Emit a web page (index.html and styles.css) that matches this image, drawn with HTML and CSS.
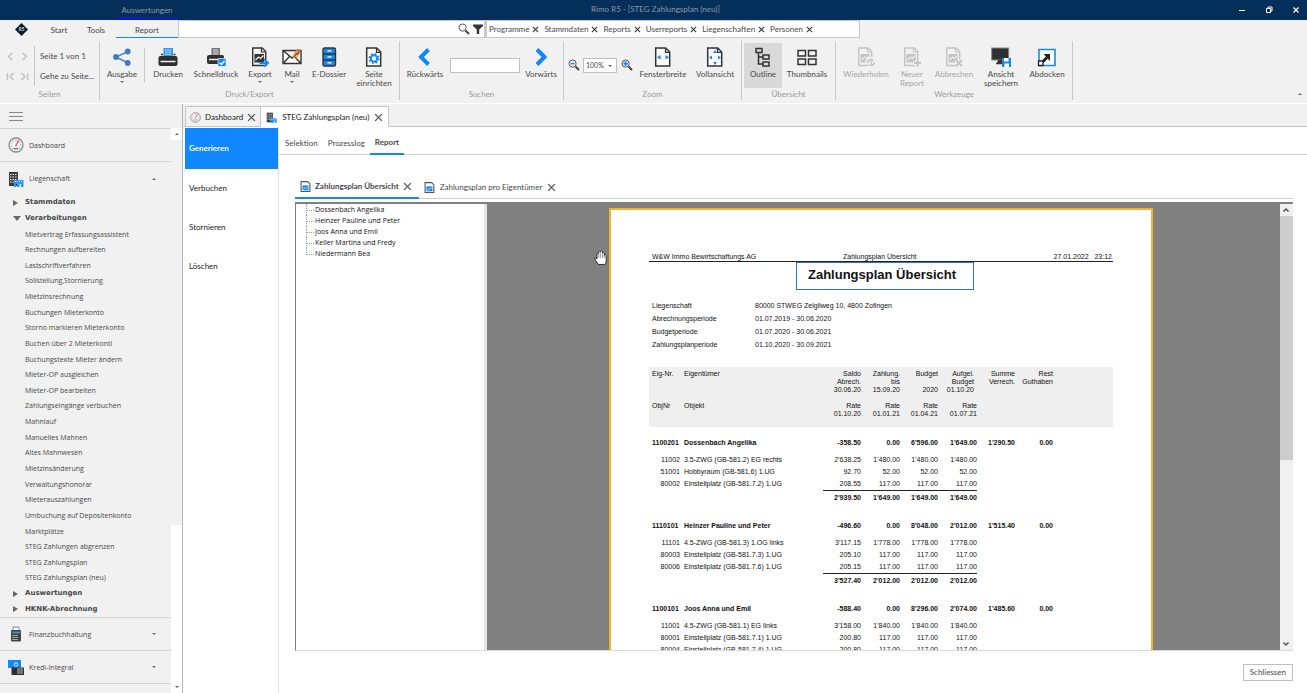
FILE: index.html
```html
<!DOCTYPE html>
<html lang="de">
<head>
<meta charset="utf-8">
<title>Rimo R5 - [STEG Zahlungsplan (neu)]</title>
<link rel="stylesheet" href="styles.css">
</head>
<body>
<svg class="defs" aria-hidden="true">
  <symbol id="x" viewBox="0 0 8 8"><path d="M1 1l6 6M7 1L1 7" fill="none" stroke="currentColor" stroke-width="1.2"/></symbol>
  <symbol id="lens" viewBox="0 0 12 12"><circle cx="4.6" cy="4.6" r="3.6" fill="none" stroke="#555" stroke-width="1"/><path d="M7.5 7.5l3.5 3.5" stroke="#444" stroke-width="2"/></symbol>
  <symbol id="doc" viewBox="0 0 20 20"><path d="M2.7 1h10l4 4v14h-14z" fill="#fbfbfb" stroke="currentColor" stroke-width="1.5"/><path d="M12.5 1v4.300h4.300" fill="none" stroke="currentColor" stroke-width="1.3"/></symbol>
  <symbol id="docpic" viewBox="0 0 20 20"><path d="M2.700 1h9.500l3.500 3.500v14H2.700z" fill="none" stroke="currentColor" stroke-width="1.400"/><path d="M11.500 1v4h4" fill="none" stroke="currentColor" stroke-width="1.200"/><path d="M4.500 7h9.500v8.500h-9.500z" fill="currentColor"/><path d="M5.500 13l3-3 2 1.500 3-3" fill="none" stroke="#f0f0f0" stroke-width="1.300"/></symbol>
  <symbol id="gauge" viewBox="0 0 16 16"><circle cx="8" cy="8" r="7" fill="#fafafa" stroke="#888" stroke-width="1.300"/><circle cx="8" cy="8" r="4.700" fill="none" stroke="#b0b0b0" stroke-width="1.200" stroke-dasharray="1.500 1"/><path d="M7.500 9.500l3-6" stroke="#e0506a" stroke-width="1.400"/><path d="M5.500 11.500h5" stroke="#777"/></symbol>
  <symbol id="building" viewBox="0 0 16 16"><path d="M1 1h9v14H1z" fill="#3c3c3c"/><path d="M2 3.500h7M2 6h7M2 8.500h7M2 11h7" stroke="#eee" stroke-width="1.100" stroke-dasharray="1.500 1"/><path d="M6 9h9.500v7H13v-3h-1.500v3H9v-3H8v3H6z" fill="#2e95ff"/><path d="M7 10.500h8" stroke="#d6eaff" stroke-dasharray="1 1"/></symbol>
  <symbol id="minidoc" viewBox="0 0 10 10"><path d="M1 .6h6l2 2v6.900H1z" fill="#fff" stroke="#555"/><path d="M2.300 4h5.400v4.500H2.300z" fill="#1787f2"/><path d="M3 7.500l1.500-1.300 1 .5 1.700-1.500" fill="none" stroke="#fff" stroke-width=".6"/></symbol>
</svg>

<div class="app">
  <header class="titlebar">
    <span class="context-tab">Auswertungen</span>
    <h1 class="window-title">Rimo R5 - [STEG Zahlungsplan (neu)]</h1>
    <div class="window-buttons">
      <button type="button" aria-label="Minimieren"><svg viewBox="0 0 8 8"><path d="M1 4.500h6" stroke="#fff"/></svg></button>
      <button type="button" aria-label="Wiederherstellen"><svg viewBox="0 0 8 8"><path d="M1.500 2.500h4v4h-4zM3 2.500V1h4v4H5.500" fill="none" stroke="#fff"/></svg></button>
      <button type="button" aria-label="Fenster schliessen"><svg viewBox="0 0 8 8"><path d="M1.500 1.500l5 5M6.500 1.500l-5 5" stroke="#fff" stroke-width="1.300"/></svg></button>
    </div>
  </header>

  <nav class="menubar">
    <span class="logo"><svg viewBox="0 0 14 14"><path d="M7 0l7 7-7 7-7-7z" fill="#0c1c30"/><text x="7" y="9" text-anchor="middle" font-size="5" font-weight="700" fill="#d5dce5">R5</text></svg></span>
    <button type="button" class="menu-start">Start</button>
    <button type="button" class="menu-tools">Tools</button>
    <button type="button" class="menu-report">Report</button>
    <div class="search"><input type="text" aria-label="Suche"><svg class="i12"><use href="#lens"/></svg><svg class="i12" viewBox="0 0 12 12"><path d="M1 1.500h10v1.500L7.200 6.500V11H4.800V6.500L1 3z" fill="#333"/></svg></div>
    <div class="filters">
      <button type="button">Programme <svg><use href="#x"/></svg></button>
      <button type="button">Stammdaten <svg><use href="#x"/></svg></button>
      <button type="button">Reports <svg><use href="#x"/></svg></button>
      <button type="button">Userreports <svg><use href="#x"/></svg></button>
      <button type="button">Liegenschaften <svg><use href="#x"/></svg></button>
      <button type="button">Personen <svg><use href="#x"/></svg></button>
    </div>
  </nav>

  <div class="ribbon">
    <section class="group g-pages">
      <div class="tools pager">
        <div class="arrows">
          <button type="button" aria-label="Vorherige Seite"><svg viewBox="0 0 10 10"><path d="M7 1L3 5l4 4"/></svg></button>
          <button type="button" aria-label="Nächste Seite"><svg viewBox="0 0 10 10"><path d="M3 1l4 4-4 4"/></svg></button>
          <button type="button" aria-label="Erste Seite"><svg viewBox="0 0 10 10"><path d="M8.500 1l-4 4 4 4M1.500 1v8"/></svg></button>
          <button type="button" aria-label="Letzte Seite"><svg viewBox="0 0 10 10"><path d="M1.500 1l4 4-4 4M8.500 1v8"/></svg></button>
        </div>
        <div class="page-info"><span>Seite 1 von 1</span><button type="button">Gehe zu Seite...</button></div>
      </div>
      <h2>Seiten</h2>
    </section>

    <section class="group g-export">
      <div class="tools">
        <button type="button" class="tool w44"><svg viewBox="0 0 20 20"><path d="M16 4.500L4 10l12 6" fill="none" stroke="#4a86c8" stroke-width="1.500"/><g fill="#3b7cc4"><circle cx="15.700" cy="4.500" r="2.900"/><circle cx="4" cy="10" r="2.900"/><circle cx="15.700" cy="16" r="2.900"/></g></svg>Ausgabe<i class="caret"></i></button>
        <span class="divider"></span>
        <button type="button" class="tool w46"><svg viewBox="0 0 20 20"><path d="M5.500 1h9.500v9H5.500z" fill="#2e95ff"/><path d="M7 3h6.500M7 5.200h6.500M7 7.400h6.500" stroke="#bcdcff"/><path d="M3 7.500h2M15.500 7.500h2" stroke="#333" stroke-width="1.500"/><rect x=".5" y="9" width="19" height="10" rx="2" fill="#2f2f2f"/><path d="M2.500 14.500h15" stroke="#eee" stroke-width="1.500"/></svg>Drucken</button>
        <button type="button" class="tool w50"><svg viewBox="0 0 20 20"><path d="M5.500 1h8.500v8H5.500z" fill="#777"/><path d="M7 3h5.500M7 5h5.500M7 7h5.500" stroke="#ddd"/><rect x="1" y="8" width="17" height="9" rx="2" fill="#2f2f2f"/><path d="M3 12.500h9" stroke="#eee" stroke-width="1.500"/><path d="M12 11.500h8v8h-8z" fill="#1787f2" stroke="#f1f1f1" stroke-width=".7"/><path d="M13.500 15.500l2 2 3-3.500" fill="none" stroke="#fff" stroke-width="1.200"/></svg>Schnelldruck</button>
        <button type="button" class="tool w38"><svg viewBox="0 0 20 20"><use href="#docpic"/><path d="M9.500 16h7M14 12.300l4 3.700-4 3.700" fill="none" stroke="#1787f2" stroke-width="2"/></svg>Export<i class="caret"></i></button>
        <button type="button" class="tool w26"><svg viewBox="0 0 20 20"><path d="M1 3.500h18v13H1zM1 3.500l9 7.500 9-7.500M1 16.500l6.500-7M19 16.500l-6.500-7" fill="#fff" stroke="#333" stroke-width="1.400"/><path d="M11.500 8.500l3-5q1-1.500 2.500-.5t.5 2.500l-3 5q-1 1.300-2 .5t-.5-2l2.500-4" fill="none" stroke="#f08a24" stroke-width="1.300"/></svg>Mail<i class="caret"></i></button>
        <button type="button" class="tool w48"><svg viewBox="0 0 20 20"><rect x="4" y="1" width="12.500" height="18" rx="1.500" fill="#1787f2" stroke="#333" stroke-width="1.400"/><path d="M4 7h12.500M4 13h12.500" stroke="#333" stroke-width="1.300"/><path d="M8.500 3.800h4M8.500 9.800h4M8.500 15.800h4" stroke="#fff" stroke-width="1.300"/></svg>E-Dossier</button>
        <button type="button" class="tool w42"><svg viewBox="0 0 20 20"><use href="#doc"/><circle cx="10" cy="11.500" r="3.200" fill="none" stroke="#1787f2" stroke-width="2"/><circle cx="10" cy="11.500" r="4.700" fill="none" stroke="#1787f2" stroke-width="1.600" stroke-dasharray="1.850 1.850"/></svg>Seite<br>einrichten</button>
      </div>
      <h2>Druck/Export</h2>
    </section>

    <section class="group g-search">
      <div class="tools">
        <button type="button" class="tool w50"><svg viewBox="0 0 20 20"><path d="M13.500 2.500L6 10l7.500 7.500" fill="none" stroke="#1087ff" stroke-width="4"/></svg>Rückwärts</button>
        <input type="text" class="find" aria-label="Suchbegriff">
        <button type="button" class="tool w42"><svg viewBox="0 0 20 20"><path d="M6 2.500l7.500 7.500L6 17.500" fill="none" stroke="#1087ff" stroke-width="4"/></svg>Vorwärts</button>
      </div>
      <h2>Suchen</h2>
    </section>

    <section class="group g-zoom">
      <div class="tools">
        <button type="button" class="zoom-btn" aria-label="Verkleinern"><svg class="i12" viewBox="0 0 12 12"><use href="#lens"/><path d="M2.500 4.600h4.200" stroke="#1787f2" stroke-width="1.500"/></svg></button>
        <span class="zoom-box"><select aria-label="Zoomstufe"><option>100%</option></select><i class="caret"></i></span>
        <button type="button" class="zoom-btn" aria-label="Vergrössern"><svg class="i12" viewBox="0 0 12 12"><use href="#lens"/><path d="M2.300 4.600h4.600M4.600 2.300v4.600" stroke="#1787f2" stroke-width="1.700"/></svg></button>
        <button type="button" class="tool w54"><svg viewBox="0 0 20 20"><use href="#doc"/><path d="M7.500 8v4.500L4 10.200zM12.500 8v4.500l3.500-2.300z" fill="#1787f2"/></svg>Fensterbreite</button>
        <button type="button" class="tool w50"><svg viewBox="0 0 20 20"><use href="#doc"/><path d="M7 8.500v4l-3-2zM13 8.500v4l3-2zM8 6h4l-2-3zM8 15h4l-2 3z" fill="#1787f2"/></svg>Vollansicht</button>
      </div>
      <h2>Zoom</h2>
    </section>

    <section class="group g-view">
      <div class="tools">
        <button type="button" class="tool w38 active"><svg viewBox="0 0 20 20"><path d="M3 1.500h6v4H3zM10 8h6v4h-6zM10 15h6v4h-6zM5.500 5.500V17H10M5.500 10H10" fill="none" stroke="#333" stroke-width="1.500"/></svg>Outline</button>
        <button type="button" class="tool w50"><svg viewBox="0 0 20 20"><path d="M1 3.500h7.500v5.500H1zM11.500 3.500H19v5.500h-7.500zM1 12h7.500v5.500H1zM11.500 12H19v5.500h-7.500z" fill="none" stroke="#333" stroke-width="1.500"/></svg>Thumbnails</button>
      </div>
      <h2>Übersicht</h2>
    </section>

    <section class="group g-work">
      <div class="tools">
        <button type="button" class="tool w54" disabled><svg viewBox="0 0 20 20"><use href="#docpic"/><path d="M11 15.500a3.500 3.500 0 0 1 6-2.500M18.500 15.500a3.500 3.500 0 0 1-6 2.500" fill="none" stroke="#f1f1f1" stroke-width="4"/><path d="M11.500 15.500a3.300 3.300 0 0 1 5.500-2M18.500 15.500a3.300 3.300 0 0 1-5.500 2" fill="none" stroke="currentColor" stroke-width="1.600"/></svg>Wiederholen</button>
        <button type="button" class="tool w38" disabled><svg viewBox="0 0 20 20"><use href="#docpic"/><path d="M11.500 16h7M15 12.500v7" stroke="#f1f1f1" stroke-width="4"/><path d="M12 16h7M15.500 12.500v7" stroke="currentColor" stroke-width="2"/></svg>Neuer<br>Report</button>
        <button type="button" class="tool w46" disabled><svg viewBox="0 0 20 20"><use href="#docpic"/><path d="M12 13l6 6M18 13l-6 6" stroke="#f1f1f1" stroke-width="4"/><path d="M12 13l6 6M18 13l-6 6" stroke="currentColor" stroke-width="1.800"/></svg>Abbrechen</button>
        <button type="button" class="tool w48"><svg viewBox="0 0 20 20"><rect x=".7" y="1" width="17" height="12" fill="#2f2f2f" stroke="#888"/><path d="M7 13h4v3H6z" fill="#333"/><path d="M5 16.500h6" stroke="#333" stroke-width="1.500"/><path d="M11 11h9v9h-9z" fill="#1787f2"/><path d="M13 11h4.500v3.500H13zM13.500 16.500h4.500V20h-4.500z" fill="#fff"/></svg>Ansicht<br>speichern</button>
        <button type="button" class="tool w44"><svg viewBox="0 0 20 20"><path d="M2 2.500h16v16H2z" fill="#fff" stroke="#1787f2" stroke-width="1.600"/><path d="M5.500 15L10 10.500" stroke="#222" stroke-width="3"/><path d="M6.500 7h6.500v7z" fill="#222"/><path d="M1.500 14h4.500v4.500H1.500z" fill="#fff" stroke="#222" stroke-width="1.300"/></svg>Abdocken</button>
      </div>
      <h2>Werkzeuge</h2>
    </section>
    <button type="button" class="collapse" aria-label="Menüband reduzieren"><i class="caret up"></i></button>
  </div>

  <div class="workspace">
    <aside class="sidebar">
      <button type="button" class="burger" aria-label="Navigation"><svg viewBox="0 0 14 10"><path d="M0 1.500h14M0 5.500h14M0 9.500h14" stroke="#888"/></svg></button>
      <div class="side-body">
        <div class="side-list">
          <button type="button" class="module"><svg><use href="#gauge"/></svg><span>Dashboard</span></button>
          <button type="button" class="module"><svg><use href="#building"/></svg><span>Liegenschaft</span><i class="caret up"></i></button>
          <ul class="tree">
            <li class="branch"><i class="closed"></i><a href="#">Stammdaten</a></li>
            <li class="branch"><i class="open"></i><a href="#">Verarbeitungen</a></li>
            <li><a href="#">Mietvertrag Erfassungsassistent</a></li>
            <li><a href="#">Rechnungen aufbereiten</a></li>
            <li><a href="#">Lastschriftverfahren</a></li>
            <li><a href="#">Sollstellung,Stornierung</a></li>
            <li><a href="#">Mietzinsrechnung</a></li>
            <li><a href="#">Buchungen Mieterkonto</a></li>
            <li><a href="#">Storno markieren Mieterkonto</a></li>
            <li><a href="#">Buchen über 2 Mieterkonti</a></li>
            <li><a href="#">Buchungstexte Mieter ändern</a></li>
            <li><a href="#">Mieter-OP ausgleichen</a></li>
            <li><a href="#">Mieter-OP bearbeiten</a></li>
            <li><a href="#">Zahlungseingänge verbuchen</a></li>
            <li><a href="#">Mahnlauf</a></li>
            <li><a href="#">Manuelles Mahnen</a></li>
            <li><a href="#">Altes Mahnwesen</a></li>
            <li><a href="#">Mietzinsänderung</a></li>
            <li><a href="#">Verwaltungshonorar</a></li>
            <li><a href="#">Mieterauszahlungen</a></li>
            <li><a href="#">Umbuchung auf Depositenkonto</a></li>
            <li><a href="#">Marktplätze</a></li>
            <li><a href="#">STEG Zahlungen abgrenzen</a></li>
            <li><a href="#">STEG Zahlungsplan</a></li>
            <li><a href="#">STEG Zahlungsplan (neu)</a></li>
            <li class="branch"><i class="closed"></i><a href="#">Auswertungen</a></li>
            <li class="branch"><i class="closed"></i><a href="#">HKNK-Abrechnung</a></li>
          </ul>
          <button type="button" class="module bordered"><svg viewBox="0 0 16 16"><path d="M5 5V1h6v4" fill="#fff" stroke="#888"/><rect x="3" y="4" width="10" height="11.500" rx="1" fill="#444"/><path d="M4 6.500h8" stroke="#2e95ff" stroke-width="1.800"/><path d="M4.500 9.500h5M4.500 11.500h5M4.500 13.500h5" stroke="#ddd" stroke-dasharray="1.200 .7"/></svg><span>Finanzbuchhaltung</span><i class="caret"></i></button>
          <button type="button" class="module"><svg viewBox="0 0 16 16"><path d="M0 1h13v8H0z" fill="#1787f2"/><circle cx="8" cy="5.500" r="1.700" fill="none" stroke="#fff" stroke-width=".8"/><path d="M3.500 8.500H16V16H3.500z" fill="#2f2f2f"/><path d="M9 10h6M9 12h6M9 14h6" stroke="#ddd" stroke-width=".8"/></svg><span>Kredi-Integral</span><i class="caret"></i></button>
        </div>
        <div class="side-scroll"><span class="sc-btn"><i class="caret up"></i></span><span class="sc-thumb"></span><span class="sc-btn"><i class="caret"></i></span></div>
      </div>
    </aside>

    <main class="main">
      <div class="doc-tabs">
        <button type="button"><svg class="i10"><use href="#gauge"/></svg>Dashboard<svg class="close"><use href="#x"/></svg></button>
        <button type="button" class="current"><svg class="i10"><use href="#building"/></svg>STEG Zahlungsplan (neu)<svg class="close"><use href="#x"/></svg></button>
      </div>
      <div class="content">
        <nav class="steps">
          <button type="button" class="selected">Generieren</button>
          <button type="button">Verbuchen</button>
          <button type="button">Stornieren</button>
          <button type="button">Löschen</button>
        </nav>
        <div class="pane">
          <div class="sub-tabs"><button type="button">Selektion</button><button type="button">Prozesslog</button><button type="button" class="selected">Report</button></div>
          <div class="report-area">
            <div class="report-tabs">
              <button type="button" class="selected"><svg class="i10"><use href="#minidoc"/></svg>Zahlungsplan Übersicht<svg class="close"><use href="#x"/></svg></button>
              <button type="button"><svg class="i10"><use href="#minidoc"/></svg>Zahlungsplan pro Eigentümer<svg class="close"><use href="#x"/></svg></button>
            </div>
            <div class="viewer">
              <ul class="outline">
                <li>Dossenbach Angelika</li><li>Heinzer Pauline und Peter</li><li>Joos Anna und Emil</li><li>Keller Martina und Fredy</li><li>Niedermann Bea</li>
              </ul>
              <div class="canvas">
                <svg class="hand" viewBox="0 0 13 15"><path d="M4.500 14.500L1 9.500Q.2 7.500 2 8l1 1V3.500q.8-1.300 1.700 0V2q.9-1.500 1.900 0v-.5q1-1.300 1.900.3V3q1-1.100 1.900.2v2q1.100-.9 1.800.3v5q0 2.500-1.500 4z" fill="#fff" stroke="#222" stroke-width=".9"/><path d="M4.800 3.500V8M6.700 2.500V8M8.600 3V8M10.400 4.500V8" stroke="#555" stroke-width=".6"/></svg>
                <article class="sheet">
                  <div class="sheet-head"><span>W&amp;W Immo Bewirtschaftungs AG</span><span>Zahlungsplan Übersicht</span><span>27.01.2022 &nbsp; 23:12</span></div>
                  <h2 class="sheet-title">Zahlungsplan Übersicht</h2>
                  <dl>
                    <dt>Liegenschaft</dt><dd>80000 STWEG Zelgliweg 10, 4800 Zofingen</dd>
                    <dt>Abrechnungsperiode</dt><dd>01.07.2019 - 30.06.2020</dd>
                    <dt>Budgetperiode</dt><dd>01.07.2020 - 30.06.2021</dd>
                    <dt>Zahlungsplanperiode</dt><dd>01.10.2020 - 30.09.2021</dd>
                  </dl>
                  <table>
                    <colgroup><col class="c-nr"><col class="c-name"><col class="c-a"><col class="c-b"><col class="c-a"><col class="c-b"><col class="c-a"><col class="c-a"><col></colgroup>
                    <thead>
                      <tr><th class="l">Eig-Nr.</th><th class="l">Eigentümer</th><th>Saldo<br>Abrech.<br>30.06.20</th><th>Zahlung.<br>bis<br>15.09.20</th><th>Budget<br><br>2020</th><th class="inset">Aufgel.<br>Budget<br>01.10.20</th><th>Summe<br>Verrech.</th><th>Rest<br>Guthaben</th><th></th></tr>
                      <tr class="second"><th class="l">ObjNr</th><th class="l">Objekt</th><th>Rate<br>01.10.20</th><th>Rate<br>01.01.21</th><th>Rate<br>01.04.21</th><th>Rate<br>01.07.21</th><th></th><th></th><th></th></tr>
                    </thead>
                    <tbody>
                      <tr class="owner"><td class="l">1100201</td><td class="l">Dossenbach Angelika</td><td>-358.50</td><td>0.00</td><td>6'596.00</td><td>1'649.00</td><td>1'290.50</td><td>0.00</td></tr>
                      <tr><td class="obj">11002</td><td class="l">3.5-ZWG (GB-581.2) EG rechts</td><td>2'638.25</td><td>1'480.00</td><td>1'480.00</td><td>1'480.00</td></tr>
                      <tr><td class="obj">51001</td><td class="l">Hobbyraum (GB-581.6) 1.UG</td><td>92.70</td><td>52.00</td><td>52.00</td><td>52.00</td></tr>
                      <tr><td class="obj">80002</td><td class="l">Einstellplatz (GB-581.7.2) 1.UG</td><td>208.55</td><td>117.00</td><td>117.00</td><td>117.00</td></tr>
                      <tr class="total"><td></td><td></td><td>2'939.50</td><td>1'649.00</td><td>1'649.00</td><td>1'649.00</td></tr>
                    </tbody>
                    <tbody>
                      <tr class="owner"><td class="l">1110101</td><td class="l">Heinzer Pauline und Peter</td><td>-496.60</td><td>0.00</td><td>8'048.00</td><td>2'012.00</td><td>1'515.40</td><td>0.00</td></tr>
                      <tr><td class="obj">11101</td><td class="l">4.5-ZWG (GB-581.3) 1.OG links</td><td>3'117.15</td><td>1'778.00</td><td>1'778.00</td><td>1'778.00</td></tr>
                      <tr><td class="obj">80003</td><td class="l">Einstellplatz (GB-581.7.3) 1.UG</td><td>205.10</td><td>117.00</td><td>117.00</td><td>117.00</td></tr>
                      <tr><td class="obj">80006</td><td class="l">Einstellplatz (GB-581.7.6) 1.UG</td><td>205.15</td><td>117.00</td><td>117.00</td><td>117.00</td></tr>
                      <tr class="total"><td></td><td></td><td>3'527.40</td><td>2'012.00</td><td>2'012.00</td><td>2'012.00</td></tr>
                    </tbody>
                    <tbody>
                      <tr class="owner"><td class="l">1100101</td><td class="l">Joos Anna und Emil</td><td>-588.40</td><td>0.00</td><td>8'296.00</td><td>2'074.00</td><td>1'485.60</td><td>0.00</td></tr>
                      <tr><td class="obj">11001</td><td class="l">4.5-ZWG (GB-581.1) EG links</td><td>3'158.00</td><td>1'840.00</td><td>1'840.00</td><td>1'840.00</td></tr>
                      <tr><td class="obj">80001</td><td class="l">Einstellplatz (GB-581.7.1) 1.UG</td><td>200.80</td><td>117.00</td><td>117.00</td><td>117.00</td></tr>
                      <tr><td class="obj">80004</td><td class="l">Einstellplatz (GB-581.7.4) 1.UG</td><td>200.80</td><td>117.00</td><td>117.00</td><td>117.00</td></tr>
                    </tbody>
                  </table>
                </article>
              </div>
              <div class="view-scroll">
                <svg viewBox="0 0 12 12"><path d="M3.500 7.500L6 5l2.500 2.500" fill="none" stroke="#505050" stroke-width="1.500"/></svg>
                <span class="view-thumb"></span>
                <svg viewBox="0 0 12 12"><path d="M3.500 4.500L6 7l2.500-2.500" fill="none" stroke="#505050" stroke-width="1.500"/></svg>
              </div>
            </div>
            <div class="actions"><button type="button">Schliessen</button></div>
          </div>
        </div>
      </div>
    </main>
  </div>
</div>
</body>
</html>
```
FILE: styles.css
```css
* { box-sizing: border-box; }
body { margin: 0; font-family: Lato, "Open Sans", sans-serif; font-size: 8px; line-height: 9px; color: #484848; }
button { border: 0; padding: 0; background: none; font: inherit; color: inherit; white-space: nowrap; }
input, select { font: inherit; color: inherit; border-radius: 0; }
svg { display: block; flex: none; }
h1, h2, ul, dl, dd { margin: 0; padding: 0; font-weight: 400; font-size: inherit; list-style: none; }
a { color: inherit; text-decoration: none; }
.defs { display: none; }
.i12 { width: 12px; height: 12px; }
.i10 { width: 11px; height: 11px; }
.caret { display: block; width: 0; height: 0; border: 2px solid transparent; border-top-color: #666; border-bottom: 0; }
.caret.up { border: 2px solid transparent; border-bottom-color: #666; border-top: 0; }

.app { display: flex; flex-direction: column; height: 100vh; overflow: hidden; background: #f1f1f1; }

.titlebar { flex: none; display: flex; height: 20px; background: #042f5a; color: #8c99a8; }
.context-tab { width: 62px; margin-left: 116px; border-bottom: 2px solid #0a14e0; text-align: center; line-height: 20px; }
.window-title { flex: 1; text-align: center; line-height: 19px; padding-right: 105px; }
.window-buttons { display: flex; align-items: center; gap: 19px; padding-right: 7px; }
.window-buttons svg { width: 8px; height: 8px; }

.menubar { flex: none; display: flex; height: 18px; align-items: stretch; }
.logo { width: 42px; display: flex; align-items: center; justify-content: center; }
.logo svg { width: 13px; height: 13px; }
.menu-start { width: 34px; padding-top: 2px; }
.menu-tools { width: 40px; padding-top: 2px; }
.menu-report { width: 62px; padding-top: 3px; border-bottom: 1px solid #1087ff; }
.search { display: flex; align-items: center; width: 307px; background: #fff; border: 1px solid #c8c8c8; gap: 2px; }
.search input { flex: 1; border: 0; min-width: 0; height: 14px; outline: 0; background: none; }
.filters { display: flex; width: 375px; background: #fff; border: 1px solid #c8c8c8; border-left-width: 2px; padding: 0 2px; gap: 5px; line-height: 14px; }
.filters button { display: flex; align-items: center; gap: 3px; }
.filters svg { width: 7px; height: 7px; color: #333; }

.ribbon { flex: none; display: flex; height: 66px; padding: 3px 0; border-bottom: 1px solid #fff; }
.group { flex: none; display: flex; flex-direction: column; border-right: 1px solid #c6c6c6; height: 59px; }
.group h2 { text-align: center; color: #9a9a9a; line-height: 12px; }
.g-pages { width: 100px; }
.g-export { width: 300px; }
.g-search { width: 164px; }
.g-zoom { width: 178px; }
.g-view { width: 94px; }
.g-work { width: 237px; }
.tools { display: flex; align-items: flex-start; height: 47px; padding-top: 2px; }
.g-view .tools { padding-left: 2px; }
.g-work .tools { padding-left: 3px; }
.tool { display: flex; flex-direction: column; align-items: center; height: 45px; padding-top: 4px; text-align: center; line-height: 9px; }
.tool > svg { width: 20px; height: 20px; margin-bottom: 3px; color: #333; }
.tool .caret { margin-top: 2px; }
.tool.active { background: #d9d9d9; }
.tool:disabled { color: #a5a5a5; }
.tool:disabled > svg { color: #c3c3c3; }
.w26 { width: 26px; }
.w38 { width: 38px; }
.w42 { width: 42px; }
.w44 { width: 44px; }
.w46 { width: 46px; }
.w48 { width: 48px; }
.w50 { width: 50px; }
.w54 { width: 54px; }
.divider { width: 1px; height: 34px; margin-top: 5px; background: #c6c6c6; }
.pager { gap: 5px; padding-top: 5px; }
.arrows { display: grid; grid-template-columns: 14px 14px; grid-auto-rows: 20px; width: 35px; padding-left: 3px; border-right: 1px solid #c6c6c6; }
.arrows button { display: flex; align-items: center; justify-content: center; }
.arrows svg { width: 9px; height: 9px; fill: none; stroke: #c6c6c6; stroke-width: 1.8; }
.page-info { display: flex; flex-direction: column; align-items: flex-start; line-height: 20px; }
.find { width: 70px; height: 15px; margin-top: 15px; border: 1px solid #c0c0c0; background: #fff; }
.zoom-btn { width: 19px; padding: 16px 0 0 4px; }
.zoom-box { position: relative; width: 34px; height: 15px; margin-top: 15px; }
.zoom-box select { appearance: none; width: 100%; height: 100%; padding: 0 2px; border: 1px solid #c0c0c0; background: #fff; font-size: 7px; line-height: 13px; }
.zoom-box .caret { position: absolute; right: 5px; top: 7px; }
.collapse { margin: auto 5px 5px auto; }

.workspace { flex: 1; display: flex; min-height: 0; }
.sidebar { flex: none; width: 183px; display: flex; flex-direction: column; border-right: 1px solid #b4b4b4; font-family: "Open Sans", sans-serif; font-size: 7px; }
.burger { height: 24px; padding: 0 0 1px 9px; }
.burger svg { width: 14px; height: 10px; }
.side-body { flex: 1; display: flex; min-height: 0; }
.side-list { flex: 1; overflow: hidden; border-top: 1px solid #d4d4d4; }
.module { display: flex; align-items: center; gap: 5px; width: 100%; height: 33px; padding: 0 15px 0 8px; border-bottom: 1px solid #d4d4d4; }
.module:nth-of-type(2) { border-bottom: 0; }
.module.bordered { border-top: 1px solid #d4d4d4; height: 34px; }
.module svg { width: 16px; height: 16px; }
.module span { flex: 1; text-align: left; }
.tree { display: grid; grid-auto-rows: 1fr; height: 422px; padding-left: 25px; }
.tree li { display: flex; align-items: center; }
.tree .branch { font-family: "DejaVu Sans", sans-serif; font-weight: 700; margin-left: -12px; gap: 6px; }
.closed { border: 3px solid transparent; border-left: 5px solid #666; border-right: 0; width: 6px; }
.open { border: 4px solid transparent; border-top: 5px solid #666; border-bottom: 0; margin-right: -2px; }
.side-scroll { width: 11px; display: flex; flex-direction: column; justify-content: space-between; background: #fff; }
.sc-btn { height: 12px; display: flex; align-items: center; justify-content: center; }
.sc-thumb { flex: 0 1 385px; margin-bottom: auto; background: #f1f1f1; }

.main { flex: 1; display: flex; flex-direction: column; min-width: 0; background: #fff; }
.doc-tabs { flex: none; display: flex; height: 23px; padding: 2px 0 0 2px; background: #f1f1f1; border-bottom: 1px solid #c6c6c6; color: #222; }
.doc-tabs button { display: flex; align-items: center; gap: 4px; height: 21px; padding: 1px 4px 0; border: 1px solid #c6c6c6; background: #f1f1f1; }
.doc-tabs .current { gap: 5px; padding: 1px 5px 0; background: #fff; border-left: 0; border-bottom-color: #fff; }
.close { width: 9px; height: 9px; color: #555; }
.content { flex: 1; display: flex; min-height: 0; }
.steps { flex: none; width: 96px; display: flex; flex-direction: column; padding: 1px 0 0 2px; border-right: 1px solid #e0e0e0; color: #222; }
.steps button { height: 39px; padding-left: 4px; text-align: left; }
.steps .selected { height: 41px; background: #1087ff; color: #fff; font-weight: 700; }
.pane { flex: 1; display: flex; flex-direction: column; min-width: 0; }
.sub-tabs { flex: none; display: flex; height: 28px; padding-left: 1px; border-bottom: 1px solid #d0d0d0; }
.sub-tabs button { padding: 4px 5px 0; height: 28px; }
.sub-tabs .selected { border-bottom: 2px solid #1087ff; font-weight: 700; }
.report-area { flex: 1; display: flex; flex-direction: column; min-height: 0; padding: 20px 14px 0 16px; }
.report-tabs { flex: none; display: flex; height: 24px; border-bottom: 1px solid #d0d0d0; margin-bottom: 3px; }
.report-tabs button { display: flex; align-items: center; gap: 5px; height: 24px; padding: 0 5px; }
.report-tabs .selected { gap: 4px; padding-right: 7px; border-bottom: 2px solid #1087ff; font-weight: 700; }
.viewer { flex: 1; display: flex; min-height: 0; border: 1px solid #808080; border-top-width: 2px; border-right: 0; border-bottom-color: #d8d8d8; }
.outline { flex: none; width: 191px; padding: 0 0 0 10px; border-right: 3px solid #e4e4e4; color: #111; font-family: "Open Sans", sans-serif; font-size: 7px; line-height: 11px; }
.outline li { position: relative; padding-left: 9px; }
.outline li::before { content: ""; position: absolute; left: 0; top: 0; width: 7px; height: 6px; border-bottom: 1px dotted #999; border-left: 1px dotted #999; }
.outline li:not(:last-child)::after { content: ""; position: absolute; left: 0; top: 6px; height: 5px; border-left: 1px dotted #999; }
.canvas { flex: 1; position: relative; display: flex; justify-content: center; overflow: hidden; background: #808080; padding: 4px 5px 0 0; }
.hand { position: absolute; left: 107px; top: 46px; width: 13px; height: 15px; }
.sheet { flex: none; width: 544px; height: 768px; padding: 41px 38px 0; border: 2px solid #f0b429; background: #fff; color: #111; font-family: "Liberation Sans", Arial, sans-serif; font-size: 7px; line-height: 8px; }
.sheet-head { display: grid; grid-template-columns: 191px 1fr auto; padding: 1px 1px 0 3px; border-bottom: 1px solid #222; line-height: 9px; }
.sheet-title { width: 178px; height: 28px; margin-left: 147px; padding-left: 11px; border: 1px solid #2f74cf; font-size: 13px; font-weight: 700; line-height: 24px; }
.sheet dl { display: grid; grid-template-columns: 103px 1fr; line-height: 13px; padding: 9px 0 0 3px; margin-bottom: 16px; }
.sheet table { width: 100%; table-layout: fixed; border-collapse: separate; border-spacing: 0; text-align: right; }
.sheet th, .sheet td { padding: 0; font-weight: 400; white-space: nowrap; vertical-align: top; }
.sheet .l { text-align: left; padding-left: 3px; }
.sheet .obj { padding-right: 1px; }
.c-nr { width: 32px; }
.c-name { width: 142px; }
.c-a { width: 38px; }
.c-b { width: 39px; }
.sheet thead th { background: #efefef; padding-top: 3px; padding-bottom: 4px; }
.sheet .second th { padding-top: 4px; padding-bottom: 9px; }
.sheet th.inset { padding-right: 3px; }
.sheet tbody::before { content: ""; display: table-row; height: 16px; }
.sheet thead + tbody::before { height: 10px; }
.sheet tbody td { height: 12px; line-height: 12px; }
.sheet .owner td { height: 17px; }
.sheet .total td { height: 14px; line-height: 13px; }
.sheet .owner td, .sheet .total td { font-weight: 700; }
.total td:nth-child(n+3) { border-top: 1px solid #222; }
.view-scroll { flex: none; width: 13px; display: flex; flex-direction: column; background: #f0f0f0; }
.view-scroll svg { width: 12px; height: 12px; }
.view-thumb { height: 244px; margin-bottom: auto; background: #cdcdcd; }
.actions { flex: none; display: flex; justify-content: flex-end; align-items: center; height: 42px; }
.actions button { height: 17px; padding: 0 6px; border: 1px solid #c0c0c0; background: #fff; }
```
